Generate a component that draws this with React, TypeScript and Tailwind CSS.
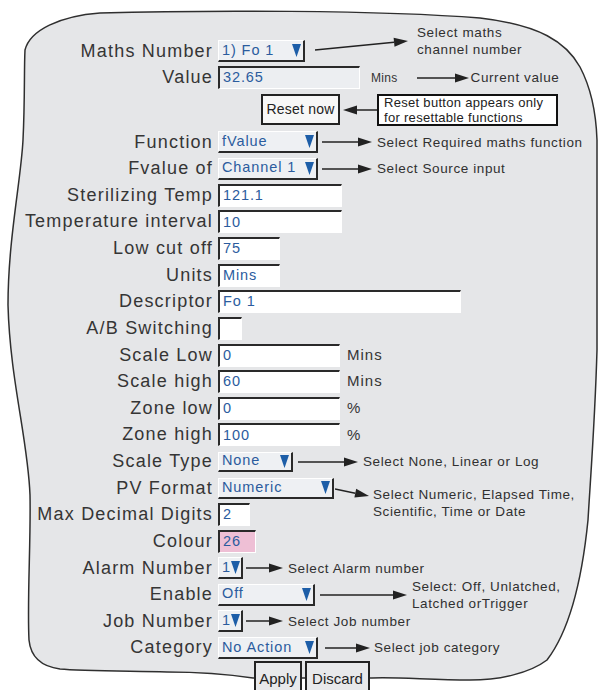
import React from "react";

const LABEL =
  "w-[213px] shrink-0 whitespace-nowrap text-right text-[18px] tracking-[1.2px] text-[#353535]";
const NOTE = "whitespace-nowrap text-[13.5px] tracking-[0.6px] leading-[17px] text-[#303030]";
const VAL = "whitespace-nowrap text-[14.5px] tracking-[0.9px] text-[#2b5c9e]";
const UNIT = "whitespace-nowrap text-[15px] tracking-[1px] text-[#353535]";

type ArrowProps = {
  w: number;
  h?: number;
  x1?: number;
  y1?: number;
  x2?: number;
  y2?: number;
  className?: string;
};

// line with a filled head at (x2, y2)
function Arrow({ w, h = 12, x1 = 0, y1 = 6, x2, y2 = 6, className = "" }: ArrowProps) {
  const tx = x2 ?? w;
  const a = Math.atan2(y2 - y1, tx - x1);
  const head = 14;
  const half = 4.5;
  const bx = tx - head * Math.cos(a);
  const by = y2 - head * Math.sin(a);
  const px = -Math.sin(a) * half;
  const py = Math.cos(a) * half;
  return (
    <svg className={`shrink-0 ${className}`} width={w} height={h} viewBox={`0 0 ${w} ${h}`}>
      <line x1={x1} y1={y1} x2={bx} y2={by} stroke="#222" strokeWidth="1.5" />
      <polygon points={`${tx},${y2} ${bx + px},${by + py} ${bx - px},${by - py}`} fill="#222" />
    </svg>
  );
}

function Select({ w, h = "h-[22px]", value }: { w: string; h?: string; value: string }) {
  return (
    <div
      className={`${w} ${h} flex shrink-0 items-center justify-between border-t border-l border-r-2 border-b-2 border-t-white border-l-white border-r-[#2a2a2a] border-b-[#2a2a2a] bg-[#eef0f3] pl-[3px] pr-[2px]`}
    >
      <span className={VAL}>{value}</span>
      <svg className="shrink-0" width="9" height="13" viewBox="0 0 9 13">
        <polygon points="0,0 9,0 4.5,13" fill="#1d5ea8" />
      </svg>
    </div>
  );
}

function Field({ w, value = "", bg = "bg-white" }: { w: string; value?: string; bg?: string }) {
  return (
    <div
      className={`${w} ${bg} flex h-[23px] shrink-0 items-center border-t-2 border-l-2 border-r border-b border-t-[#2a2a2a] border-l-[#2a2a2a] border-r-white border-b-white pl-[3px]`}
    >
      <span className={VAL}>{value}</span>
    </div>
  );
}

function Row({
  label,
  children,
  h = "h-[26.63px]",
  align = "items-center",
}: {
  label: string;
  children?: React.ReactNode;
  h?: string;
  align?: string;
}) {
  return (
    <div className={`flex ${h} ${align}`}>
      <div className={LABEL}>{label}</div>
      <div className={`ml-[5px] flex ${align}`}>{children}</div>
    </div>
  );
}

function Outline() {
  return (
    <svg className="absolute left-0 top-0" width="598" height="690" viewBox="0 0 598 690">
      <path
        d="M100 13 C200 10 380 10 480 18 C540 25 566 42 580 67 C590 86 596 110 597 140 L597 350 C595 420 591 470 588 520 C582 580 570 630 547 660 C530 673 500 680 470 680 C430 680 400 677 372 678 L253 678 C233 675 200 672 167 672 C120 671 80 671 60 669 C45 667 31 660 29 640 C27 600 31 540 30 495 C28 440 10 380 8 305 C8 240 21 180 23 140 C25 100 24 70 25 50 C30 30 60 16 100 13 Z"
        fill="#e5e6e8"
        stroke="#2f2f2f"
        strokeWidth="1.5"
      />
    </svg>
  );
}

export default function App() {
  return (
    <div className="relative h-[690px] w-[598px] overflow-hidden bg-white font-['Liberation_Sans',Arial,sans-serif]">
      <Outline />
      <div className="relative flex flex-col pt-[37.7px]">
        <Row label="Maths Number">
          <Select w="w-[87px]" value="1) Fo 1" />
          <Arrow w={100} h={30} x1={3} y1={14} x2={96} y2={5} className="ml-[7px]" />
          <div className={`${NOTE} ml-[5px] mb-[20px] leading-[16px]`}>
            Select maths
            <br />
            channel number
          </div>
        </Row>

        <Row label="Value">
          <Field w="w-[142px]" value="32.65" bg="bg-[#eceef1]" />
          <span className="ml-[11px] whitespace-nowrap text-[12px] tracking-[0.3px] text-[#333]">Mins</span>
          <Arrow w={52} className="ml-[19px]" />
          <span className={`${NOTE} ml-[2px]`}>Current value</span>
        </Row>

        <Row label="" h="h-[37.8px]">
          <div className="ml-[43px] flex h-[31px] w-[79px] shrink-0 items-center justify-center border-2 border-[#222] bg-[#f7f7f7] text-[14px] tracking-[0.2px] text-[#222]">
            Reset now
          </div>
          <Arrow w={35} x1={35} x2={1} className="ml-[2px]" />
          <div className="flex h-[32px] w-[181px] shrink-0 items-center border-2 border-[#111] bg-white pl-[5px] text-[13px] tracking-[0.3px] leading-[15px] text-[#222]">
            <div>
              Reset button appears only
              <br />
              for resettable functions
            </div>
          </div>
        </Row>

        <Row label="Function">
          <Select w="w-[100px]" value="fValue" />
          <Arrow w={50} className="ml-[4px]" />
          <span className={`${NOTE} ml-[5px]`}>Select Required maths function</span>
        </Row>

        <Row label="Fvalue of">
          <Select w="w-[100px]" value="Channel 1" />
          <Arrow w={50} className="ml-[4px]" />
          <span className={`${NOTE} ml-[5px]`}>Select Source input</span>
        </Row>

        <Row label="Sterilizing Temp">
          <Field w="w-[124px]" value="121.1" />
        </Row>
        <Row label="Temperature interval">
          <Field w="w-[124px]" value="10" />
        </Row>
        <Row label="Low cut off">
          <Field w="w-[62px]" value="75" />
        </Row>
        <Row label="Units">
          <Field w="w-[62px]" value="Mins" />
        </Row>
        <Row label="Descriptor">
          <Field w="w-[243px]" value="Fo 1" />
        </Row>
        <Row label="A/B Switching">
          <Field w="w-[24px]" />
        </Row>

        <Row label="Scale Low">
          <Field w="w-[122px]" value="0" />
          <span className={`${UNIT} ml-[7px]`}>Mins</span>
        </Row>
        <Row label="Scale high">
          <Field w="w-[122px]" value="60" />
          <span className={`${UNIT} ml-[7px]`}>Mins</span>
        </Row>
        <Row label="Zone low">
          <Field w="w-[122px]" value="0" />
          <span className={`${UNIT} ml-[7px]`}>%</span>
        </Row>
        <Row label="Zone high">
          <Field w="w-[122px]" value="100" />
          <span className={`${UNIT} ml-[7px]`}>%</span>
        </Row>

        <Row label="Scale Type">
          <Select w="w-[75px]" h="h-[20px]" value="None" />
          <Arrow w={60} className="ml-[5px]" />
          <span className={`${NOTE} ml-[5px]`}>Select None, Linear or Log</span>
        </Row>

        <Row label="PV Format">
          <Select w="w-[116px]" h="h-[21px]" value="Numeric" />
          <Arrow w={36} h={24} x1={0} y1={13} x2={34} y2={20} className="ml-[1px]" />
          <div className={`${NOTE} ml-[2px] mt-[29px]`}>
            Select Numeric, Elapsed Time,
            <br />
            Scientific, Time or Date
          </div>
        </Row>

        <Row label="Max Decimal Digits">
          <Field w="w-[32px]" value="2" />
        </Row>
        <Row label="Colour">
          <Field w="w-[38px]" value="26" bg="bg-[#eebfd5]" />
        </Row>

        <Row label="Alarm Number">
          <Select w="w-[25px]" value="1" />
          <Arrow w={37} className="ml-[3px]" />
          <span className={`${NOTE} ml-[5px]`}>Select Alarm number</span>
        </Row>

        <Row label="Enable">
          <Select w="w-[97px]" value="Off" />
          <Arrow w={87} className="ml-[5px]" />
          <div className={`${NOTE} ml-[5px]`}>
            Select: Off, Unlatched,
            <br />
            Latched orTrigger
          </div>
        </Row>

        <Row label="Job Number">
          <Select w="w-[25px]" value="1" />
          <Arrow w={37} className="ml-[3px]" />
          <span className={`${NOTE} ml-[5px]`}>Select Job number</span>
        </Row>

        <Row label="Category">
          <Select w="w-[100px]" value="No Action" />
          <Arrow w={45} className="ml-[7px]" />
          <span className={`${NOTE} ml-[4px]`}>Select job category</span>
        </Row>

        <Row label="" h="h-[40px]" align="items-start">
          <div className="ml-[36px] flex h-[36px] w-[48px] shrink-0 items-center justify-center border-2 border-[#222] bg-[#e8e9eb] text-[15px] text-[#222]">
            Apply
          </div>
          <div className="ml-[3px] flex h-[36px] w-[65px] shrink-0 items-center justify-center border-2 border-[#222] bg-[#e8e9eb] text-[15px] text-[#222]">
            Discard
          </div>
        </Row>
      </div>
    </div>
  );
}
